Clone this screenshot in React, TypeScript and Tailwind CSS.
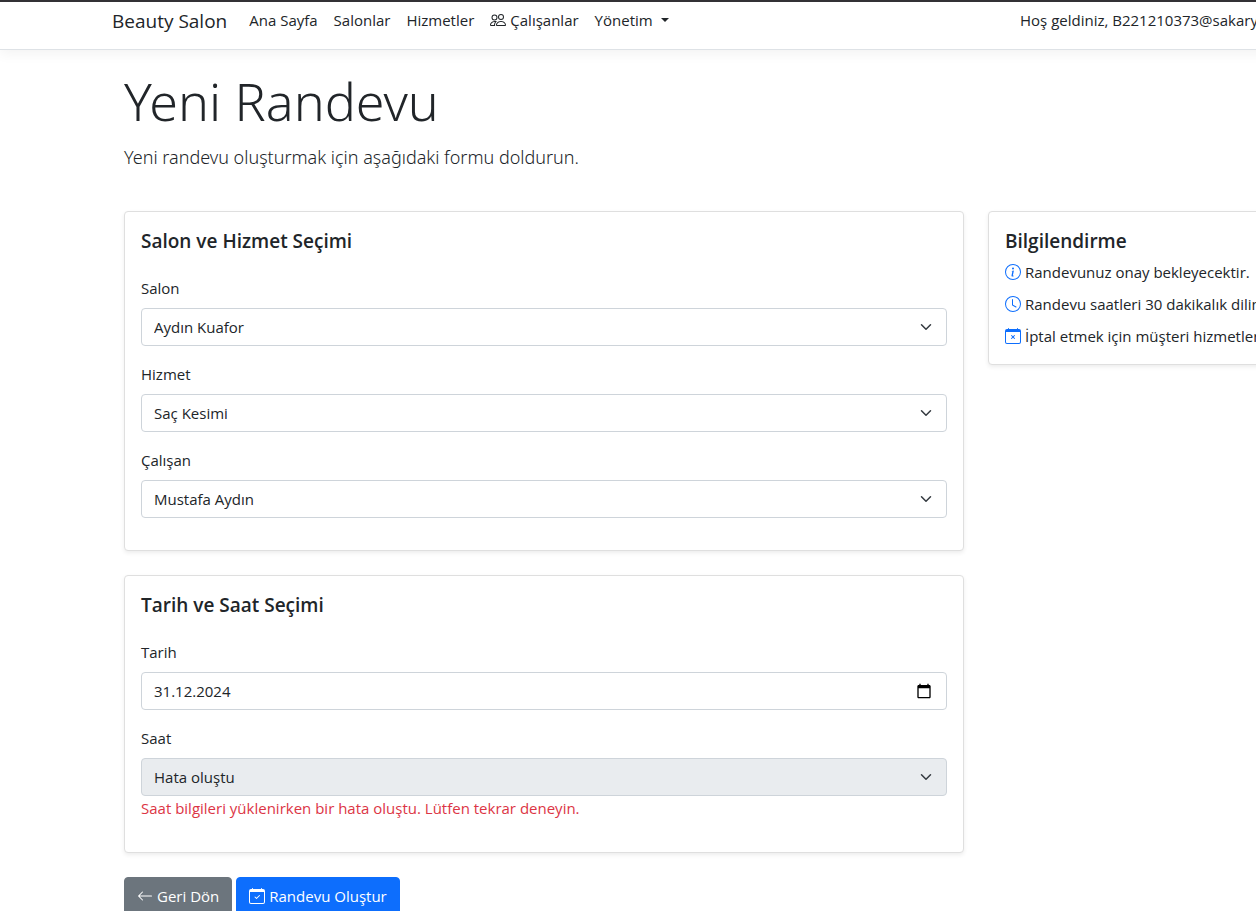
import type { ReactNode } from "react";
import {
  BsArrowLeft,
  BsCalendarCheck,
  BsCalendarX,
  BsClock,
  BsInfoCircle,
  BsPeople,
} from "react-icons/bs";

function Card({ title, children }: { title: string; children: ReactNode }) {
  return (
    <section className="mb-6 rounded border border-[#dfdfdf] bg-white p-4 shadow-[0_2px_4px_rgba(0,0,0,0.075)]">
      <h5 className="text-[19px] leading-[26px] font-semibold">{title}</h5>
      {children}
    </section>
  );
}

function SelectField({
  id,
  label,
  value,
  disabled,
  error,
}: {
  id: string;
  label: string;
  value: string;
  disabled?: boolean;
  error?: string;
}) {
  return (
    <div className="mb-4">
      <label htmlFor={id} className="mb-2 block">
        {label}
      </label>
      <div className="relative">
        <select
          id={id}
          disabled={disabled}
          className="block h-[38px] w-full appearance-none rounded border border-[#ced4da] bg-white pr-9 pl-3 text-[#212529] disabled:bg-[#e9ecef] disabled:opacity-100"
        >
          <option>{value}</option>
        </select>
        <svg
          viewBox="0 0 16 16"
          className="pointer-events-none absolute top-[11px] right-[13px] h-4 w-4"
          fill="none"
          stroke="#343a40"
          strokeWidth="2"
          strokeLinecap="round"
          strokeLinejoin="round"
        >
          <path d="m2 5 6 6 6-6" transform="translate(2 2) scale(.75)" />
        </svg>
      </div>
      {error && <p className="text-[#dc3545]">{error}</p>}
    </div>
  );
}

function Info({ icon, children }: { icon: ReactNode; children: ReactNode }) {
  return (
    <li className="flex items-center gap-1 whitespace-nowrap">
      <span className="text-[#0d6efd]">{icon}</span>
      {children}
    </li>
  );
}

export default function App() {
  return (
    <div className="min-h-screen overflow-x-hidden bg-white font-['Open_Sans','Noto_Sans',sans-serif] text-[15px] leading-6 text-[#212529]">
      <div className="min-w-[1520px]">
        <header className="border-t-2 border-b border-t-[#333135] border-b-[#dee2e6] bg-white shadow-[0_4px_12px_rgba(0,0,0,0.05)]">
          <nav className="mx-auto flex h-[47px] max-w-[1320px] items-start px-3 pt-[6px]">
            <a href="#" className="mr-[22px] text-[19px] leading-[26px]">
              Beauty Salon
            </a>
            <div className="flex gap-4">
              <a href="#">Ana Sayfa</a>
              <a href="#">Salonlar</a>
              <a href="#">Hizmetler</a>
              <a href="#" className="flex items-center gap-1">
                <BsPeople size={16} />
                Çalışanlar
              </a>
              <button type="button" className="flex items-center gap-2">
                Yönetim
                <span className="border-x-4 border-t-4 border-x-transparent border-t-[#212529]" />
              </button>
            </div>
            <span className="ml-auto w-[388px] whitespace-nowrap">
              Hoş geldiniz, B221210373@sakarya.edu.tr
            </span>
          </nav>
        </header>

        <main className="mx-auto max-w-[1320px] px-6 pt-[18px]">
          <h1 className="mb-2 font-['Noto_Sans','Open_Sans',sans-serif] text-[52px] leading-[66px] font-light">
            Yeni Randevu
          </h1>
          <p className="mb-[39px] font-['Noto_Sans','Open_Sans',sans-serif] text-[18px] leading-[30px] font-light">
            Yeni randevu oluşturmak için aşağıdaki formu doldurun.
          </p>

          <div className="grid grid-cols-[840fr_408fr] items-start gap-6">
            <form>
              <Card title="Salon ve Hizmet Seçimi">
                <div className="pt-[22px]">
                  <SelectField id="salon" label="Salon" value="Aydın Kuafor" />
                  <SelectField id="hizmet" label="Hizmet" value="Saç Kesimi" />
                  <SelectField id="calisan" label="Çalışan" value="Mustafa Aydın" />
                </div>
              </Card>

              <Card title="Tarih ve Saat Seçimi">
                <div className="pt-[22px]">
                  <div className="mb-4">
                    <label htmlFor="tarih" className="mb-2 block">
                      Tarih
                    </label>
                    <div className="relative">
                      <input
                        id="tarih"
                        type="text"
                        defaultValue="31.12.2024"
                        className="block h-[38px] w-full rounded border border-[#ced4da] bg-white px-3"
                      />
                      <button
                        type="button"
                        aria-label="Takvimi aç"
                        className="absolute top-[11px] right-[15px]"
                      >
                        <svg viewBox="0 0 24 24" className="h-4 w-4" fill="#000">
                          <path d="M20 3h-1V1h-2v2H7V1H5v2H4c-1.100 0-2 .9-2 2v16c0 1.100.9 2 2 2h16c1.100 0 2-.9 2-2V5c0-1.100-.9-2-2-2zm0 18H4V8h16v13z" />
                        </svg>
                      </button>
                    </div>
                  </div>
                  <SelectField
                    id="saat"
                    label="Saat"
                    value="Hata oluştu"
                    disabled
                    error="Saat bilgileri yüklenirken bir hata oluştu. Lütfen tekrar deneyin."
                  />
                </div>
              </Card>

              <div className="flex gap-1 text-white">
                <a
                  href="#"
                  className="flex h-[38px] items-center gap-1 rounded border border-[#6c757d] bg-[#6c757d] px-3"
                >
                  <BsArrowLeft size={16} />
                  Geri Dön
                </a>
                <button
                  type="submit"
                  className="flex h-[38px] items-center gap-1 rounded border border-[#0d6efd] bg-[#0d6efd] px-3"
                >
                  <BsCalendarCheck size={16} />
                  Randevu Oluştur
                </button>
              </div>
            </form>

            <aside>
              <Card title="Bilgilendirme">
                <ul className="flex flex-col gap-2 pt-[6px]">
                  <Info icon={<BsInfoCircle size={16} />}>Randevunuz onay bekleyecektir.</Info>
                  <Info icon={<BsClock size={16} />}>Randevu saatleri 30 dakikalık dilimlerdir.</Info>
                  <Info icon={<BsCalendarX size={16} />}>
                    İptal etmek için müşteri hizmetlerini arayın.
                  </Info>
                </ul>
              </Card>
            </aside>
          </div>
        </main>
      </div>
    </div>
  );
}
